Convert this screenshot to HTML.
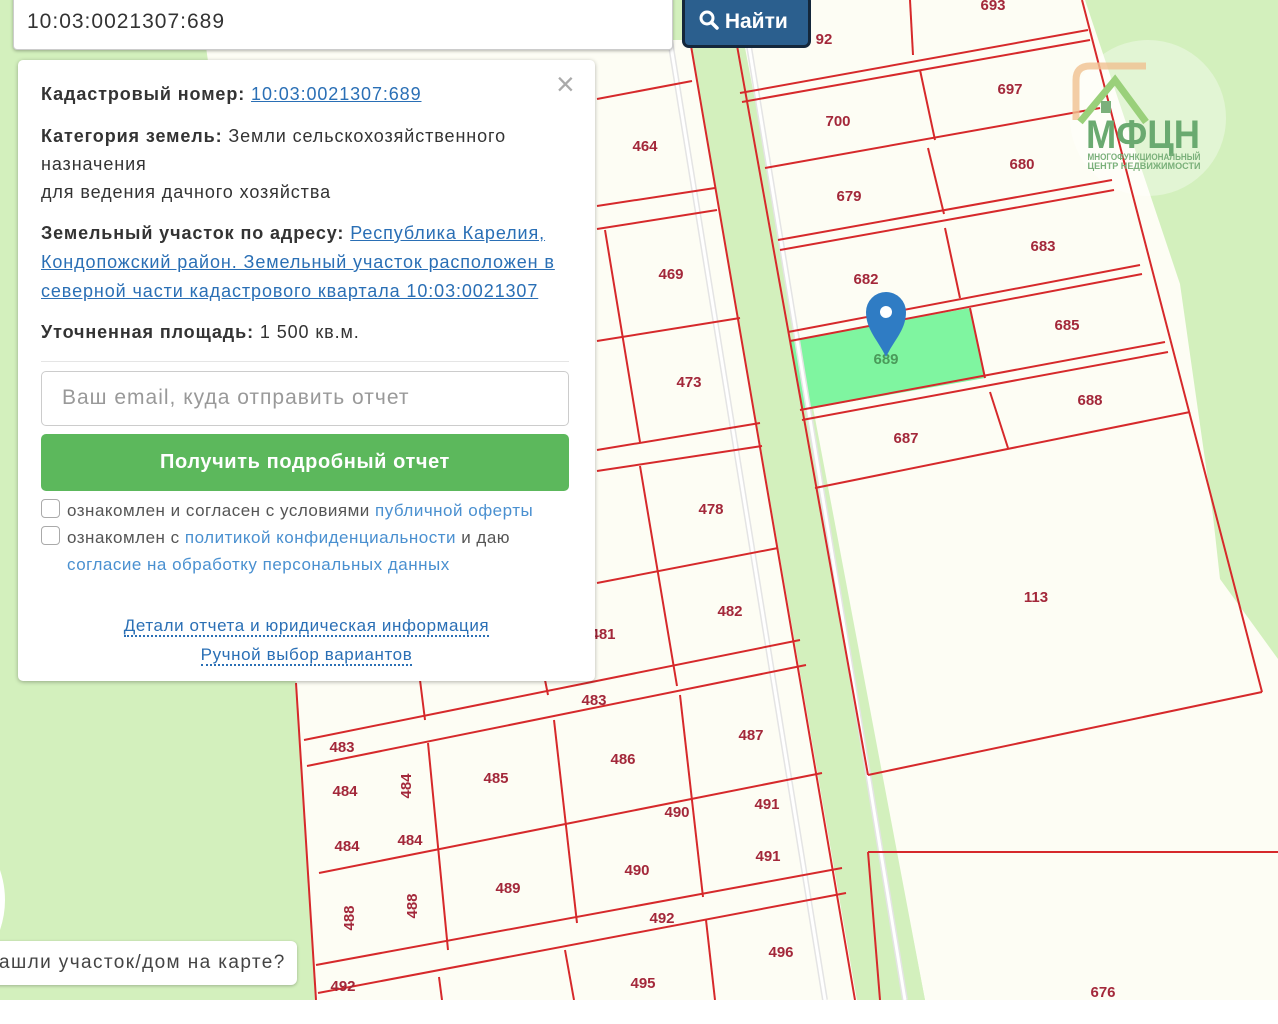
<!DOCTYPE html>
<html><head><meta charset="utf-8"><style>
*{margin:0;padding:0;box-sizing:border-box}
body{width:1278px;height:1024px;overflow:hidden;background:#fff;font-family:"Liberation Sans","DejaVu Sans",sans-serif;position:relative}
#map{position:absolute;left:0;top:0}
.search{position:absolute;left:13px;top:-6px;width:660px;height:56px;background:#fff;border:1px solid #ccc;border-radius:4px;box-shadow:0 1px 3px rgba(0,0,0,.3);font-size:21px;letter-spacing:1px;color:#333;padding:15px 0 0 13px}
.btn{position:absolute;left:682px;top:-6px;width:129px;height:54px;background:#2b5f8e;border:3px solid #14273b;border-radius:7px;color:#fff;font-weight:bold;font-size:21px;padding:13px 0 0 14px}
.pop{position:absolute;left:18px;top:60px;width:577px;height:621px;background:#fff;border-radius:5px;box-shadow:0 1px 4px rgba(0,0,0,.3);color:#333;font-size:18px;letter-spacing:0.9px}
.pop b{font-weight:bold}
.pop a{color:#2a6fb5;text-decoration:underline}
.t{position:absolute;left:23px;white-space:nowrap}
.close{position:absolute;left:538px;top:6px;font-size:32px;color:#aaa;letter-spacing:0}
.sep{position:absolute;left:23px;top:301px;width:528px;height:1px;background:#e5e5e5}
.inp{position:absolute;left:23px;top:311px;width:528px;height:55px;border:1px solid #ccc;border-radius:5px;font-size:21px;letter-spacing:1px;color:#999;padding:14px 0 0 20px}
.go{position:absolute;left:23px;top:374px;width:528px;height:57px;background:#5cb85c;border-radius:5px;color:#fff;font-weight:bold;font-size:20px;letter-spacing:0.6px;text-align:center;padding-top:17px}
.cb{position:absolute;left:23px;width:19px;height:19px;border:1px solid #aaa;border-radius:4px}
.sm{font-size:17px;letter-spacing:0.5px;color:#555}
.sm a{color:#4a90d0;text-decoration:none}
.ln{position:absolute;left:0;width:577px;text-align:center;font-size:17px;letter-spacing:0.6px}
.ln a{color:#2a6fb5;text-decoration:none;border-bottom:2px dotted #2a6fb5}
.found{position:absolute;left:-10px;top:941px;width:307px;height:44px;background:#fff;border-radius:6px;box-shadow:0 1px 3px rgba(0,0,0,.25);font-size:19px;letter-spacing:1.4px;color:#444;white-space:nowrap;overflow:hidden}
.found span{position:absolute;left:9px;top:11px}
</style></head><body>
<svg id="map" width="1278" height="1024" viewBox="0 0 1278 1024">
<rect x="0" y="0" width="1278" height="1000" fill="#d3f0bd"/>
<polygon points="205,40 693,40 857,1000 316,1000 296,683" fill="#fdfdf4"/>
<polygon points="736,0 1085,0 1180,284 1213,516 1220,579 1278,659 1278,1000 925,1000" fill="#fdfdf4"/>
<polygon points="690,40 740,40 925,1000 857,1000" fill="#d3f0bd"/>
<circle cx="1148" cy="118" r="78" fill="#fff" opacity=".35"/>
<polygon points="790,340 970,308 985,378 802,410" fill="#7ff5a0"/>
<g stroke="#e4e4e4" stroke-width="6" fill="none"><line x1="670" y1="40" x2="825" y2="1000"/><line x1="748" y1="40" x2="905" y2="1000"/></g>
<g stroke="#fff" stroke-width="3" fill="none"><line x1="670" y1="40" x2="825" y2="1000"/><line x1="748" y1="40" x2="905" y2="1000"/></g>
<g stroke="#d6292b" stroke-width="2" fill="none">
<line x1="690" y1="40" x2="855" y2="1000"/>
<line x1="736" y1="40" x2="868" y2="775"/>
<line x1="868" y1="852" x2="880" y2="1000"/>
<line x1="868" y1="852" x2="1278" y2="852"/>
<line x1="1082" y1="0" x2="1262" y2="692"/>
<line x1="910" y1="0" x2="913" y2="55"/>
<line x1="740" y1="93" x2="1088" y2="30"/><line x1="742" y1="102" x2="1090" y2="40"/>
<line x1="920" y1="70" x2="935" y2="140"/>
<line x1="765" y1="168" x2="1100" y2="108"/>
<line x1="928" y1="148" x2="944" y2="214"/>
<line x1="778" y1="240" x2="1112" y2="180"/><line x1="780" y1="250" x2="1114" y2="190"/>
<line x1="945" y1="228" x2="960" y2="298"/>
<line x1="788" y1="332" x2="1140" y2="265"/><line x1="790" y1="341" x2="1142" y2="274"/>
<line x1="970" y1="308" x2="985" y2="378"/>
<line x1="800" y1="410" x2="1165" y2="342"/><line x1="802" y1="420" x2="1168" y2="352"/>
<line x1="990" y1="392" x2="1008" y2="448"/>
<line x1="815" y1="488" x2="1190" y2="412"/>
<line x1="868" y1="775" x2="1262" y2="692"/>
<line x1="597" y1="99" x2="692" y2="81"/>
<line x1="597" y1="206" x2="715" y2="188"/><line x1="597" y1="229" x2="717" y2="210"/>
<line x1="605" y1="230" x2="640" y2="442"/>
<line x1="597" y1="341" x2="740" y2="318"/>
<line x1="597" y1="450" x2="760" y2="423"/><line x1="597" y1="471" x2="762" y2="446"/>
<line x1="640" y1="466" x2="677" y2="686"/>
<line x1="597" y1="583" x2="778" y2="548"/>
<line x1="296" y1="683" x2="316" y2="1000"/>
<line x1="304" y1="740" x2="800" y2="640"/><line x1="307" y1="766" x2="806" y2="665"/>
<line x1="420" y1="680" x2="425" y2="720"/><line x1="545" y1="680" x2="548" y2="695"/>
<line x1="319" y1="873" x2="822" y2="773"/>
<line x1="316" y1="965" x2="842" y2="868"/><line x1="318" y1="993" x2="846" y2="893"/>
<line x1="428" y1="743" x2="448" y2="950"/>
<line x1="554" y1="720" x2="577" y2="923"/>
<line x1="680" y1="695" x2="703" y2="897"/>
<line x1="565" y1="950" x2="574" y2="1000"/>
<line x1="439" y1="977" x2="442" y2="1000"/>
<line x1="706" y1="920" x2="715" y2="1000"/>
</g>
<g fill="#a3283a" font-family="Liberation Sans, sans-serif" font-size="15" text-anchor="middle" font-weight="bold">
<text x="993" y="10">693</text><text x="824" y="44">92</text><text x="1010" y="94">697</text><text x="838" y="126">700</text><text x="1022" y="169">680</text><text x="849" y="201">679</text><text x="1043" y="251">683</text><text x="866" y="284">682</text><text x="1067" y="330">685</text><text x="886" y="364" fill="#4a9a5a">689</text><text x="1090" y="405">688</text><text x="906" y="443">687</text>
<text x="645" y="151">464</text><text x="671" y="279">469</text><text x="689" y="387">473</text><text x="711" y="514">478</text><text x="730" y="616">482</text><text x="603" y="639">481</text><text x="1036" y="602">113</text><text x="594" y="705">483</text><text x="342" y="752">483</text><text x="751" y="740">487</text><text x="623" y="764">486</text><text x="496" y="783">485</text><text x="345" y="796">484</text><text x="767" y="809">491</text><text x="677" y="817">490</text><text x="347" y="851">484</text><text x="410" y="845">484</text><text x="768" y="861">491</text><text x="637" y="875">490</text><text x="508" y="893">489</text><text x="662" y="923">492</text><text x="781" y="957">496</text><text x="643" y="988">495</text><text x="343" y="991">492</text><text x="1103" y="997">676</text>
<text transform="translate(411,786) rotate(-90)">484</text><text transform="translate(354,918) rotate(-90)">488</text><text transform="translate(417,906) rotate(-90)">488</text>
</g>
<g>
<path d="M1076 120 V80 Q1076 66 1090 66 H1146" stroke="#f0c090" stroke-width="7" fill="none" opacity=".8"/>
<path d="M1080 122 L1115 80 L1146 122" stroke="#9ad07a" stroke-width="7" fill="none"/>
<rect x="1101" y="101" width="10" height="12" fill="#7bb07b"/>
<text x="1143" y="148" text-anchor="middle" font-family="Liberation Sans, sans-serif" font-weight="bold" font-size="40" fill="#6aaa70" textLength="114" lengthAdjust="spacingAndGlyphs">МФЦН</text>
<text x="1144" y="160" text-anchor="middle" font-family="Liberation Sans, sans-serif" font-weight="bold" font-size="9" fill="#7ab07a" textLength="113" lengthAdjust="spacingAndGlyphs">МНОГОФУНКЦИОНАЛЬНЫЙ</text>
<text x="1144" y="169" text-anchor="middle" font-family="Liberation Sans, sans-serif" font-weight="bold" font-size="9" fill="#7ab07a" textLength="113" lengthAdjust="spacingAndGlyphs">ЦЕНТР НЕДВИЖИМОСТИ</text>
</g>
<path d="M886 357 C878 340 866 330 866 312 A20 20 0 0 1 906 312 C906 330 894 340 886 357Z" fill="#2f7cc4"/>
<circle cx="886" cy="312" r="6" fill="#fff"/>
<path d="M0 870 Q10 900 0 930Z" fill="#fff"/>
<rect x="0" y="1000" width="1278" height="24" fill="#fff"/>
</svg>
<div class="search">10:03:0021307:689</div>
<div class="btn"><svg width="20" height="20" viewBox="0 0 20 20" style="vertical-align:-2px"><circle cx="8" cy="8" r="6" stroke="#fff" stroke-width="3" fill="none"/><line x1="12.5" y1="12.5" x2="18" y2="18" stroke="#fff" stroke-width="3.5" stroke-linecap="round"/></svg> Найти</div>
<div class="pop">
<div class="close">×</div>
<div class="t" style="top:24px"><b>Кадастровый номер:</b> <a>10:03:0021307:689</a></div>
<div class="t" style="top:66px"><b>Категория земель:</b> Земли сельскохозяйственного</div>
<div class="t" style="top:94px">назначения</div>
<div class="t" style="top:122px">для ведения дачного хозяйства</div>
<div class="t" style="top:163px"><b>Земельный участок по адресу:</b> <a>Республика Карелия,</a></div>
<div class="t" style="top:192px"><a>Кондопожский район. Земельный участок расположен в</a></div>
<div class="t" style="top:221px"><a>северной части кадастрового квартала 10:03:0021307</a></div>
<div class="t" style="top:262px"><b>Уточненная площадь:</b> 1 500 кв.м.</div>
<div class="sep"></div>
<div class="inp">Ваш email, куда отправить отчет</div>
<div class="go">Получить подробный отчет</div>
<div class="cb" style="top:439px"></div>
<div class="t sm" style="left:49px;top:441px">ознакомлен и согласен с условиями <a>публичной оферты</a></div>
<div class="cb" style="top:466px"></div>
<div class="t sm" style="left:49px;top:468px">ознакомлен с <a>политикой конфиденциальности</a> и даю</div>
<div class="t sm" style="left:49px;top:495px"><a>согласие на обработку персональных данных</a></div>
<div class="ln" style="top:556px"><a>Детали отчета и юридическая информация</a></div>
<div class="ln" style="top:585px"><a>Ручной выбор вариантов</a></div>
</div>
<div class="found"><span>ашли участок/дом на карте?</span></div>
</body></html>
